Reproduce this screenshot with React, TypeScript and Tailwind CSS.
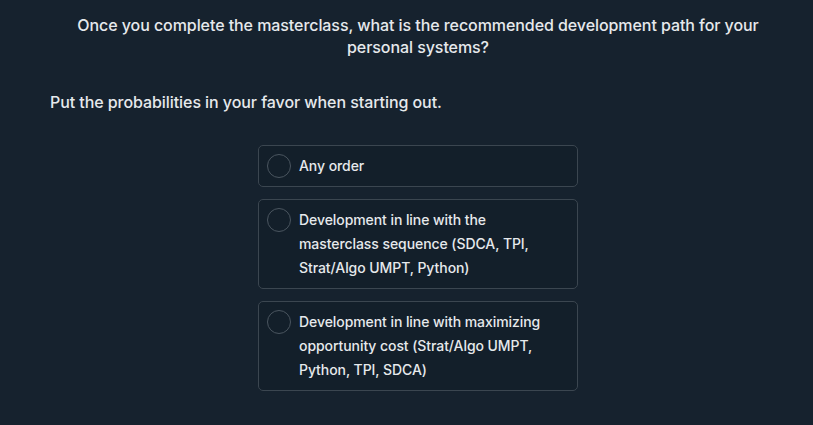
import React, { useState } from 'react'

const options = [
  'Any order',
  'Development in line with the masterclass sequence (SDCA, TPI, Strat/Algo UMPT, Python)',
  'Development in line with maximizing opportunity cost (Strat/Algo UMPT, Python, TPI, SDCA)',
]

const App: React.FC = () => {
  const [selected, setSelected] = useState<number | null>(null)

  return (
    <div
      className="min-h-screen w-full bg-[#16222e] text-[#e6e9ec] pl-[50px] pr-[27px] pt-[14px] tracking-[-0.07px]"
      style={{ fontFamily: 'Inter, "Noto Sans", sans-serif' }}
    >
      <h2 className="mx-auto max-w-[700px] text-center text-base font-medium leading-[22px]">
        Once you complete the masterclass, what is the recommended development path for your personal systems?
      </h2>
      <p className="mt-[32px] text-base font-medium leading-6">
        Put the probabilities in your favor when starting out.
      </p>
      <div className="mx-auto mt-[31px] flex w-[320px] flex-col gap-3">
        {options.map((opt, i) => (
          <button
            key={i}
            type="button"
            onClick={() => setSelected(i)}
            className="flex items-start gap-2 rounded-[5px] border border-[#3b4650] bg-[#131f2a] p-2 text-left"
          >
            <span
              className={
                selected === i
                  ? 'h-6 w-6 shrink-0 rounded-full border-[6px] border-[#e6e9ec]'
                  : 'h-6 w-6 shrink-0 rounded-full border border-[#4a555f]'
              }
            />
            <span className="block pr-6 text-sm font-medium leading-6">{opt}</span>
          </button>
        ))}
      </div>
    </div>
  )
}

export default App
